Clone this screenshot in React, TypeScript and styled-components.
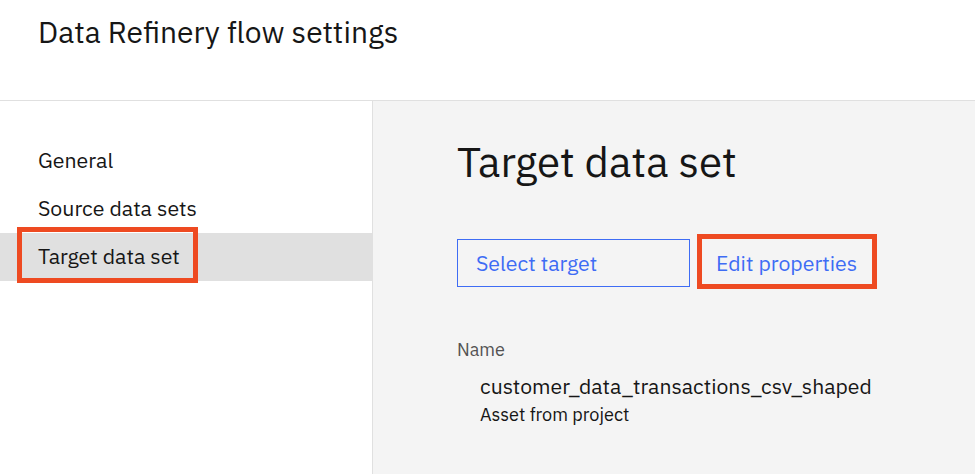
import React from "react";
import styled, { createGlobalStyle } from "styled-components";

const Global = createGlobalStyle`
  html, body { margin: 0; padding: 0; background: #ffffff; }
  body { font-family: "IBM Plex Sans", Inter, "Liberation Sans", sans-serif; color: #161616; }
  * { box-sizing: border-box; }
`;

const Page = styled.div`
  width: 975px;
  height: 474px;
  display: flex;
  flex-direction: column;
  overflow: hidden;
`;

const Header = styled.header`
  height: 101px;
  flex: none;
  padding: 13px 0 0 38px;
  border-bottom: 1px solid #e0e0e0;
`;

const Title = styled.h1`
  margin: 0;
  font-size: 30px;
  line-height: 38px;
  font-weight: 400;
  color: #161616;
`;

const Body = styled.div`
  flex: 1;
  display: flex;
  min-height: 0;
`;

const Sidebar = styled.nav`
  width: 373px;
  flex: none;
  border-right: 1px solid #e0e0e0;
  padding-top: 36px;
  display: flex;
  flex-direction: column;
`;

const NavItem = styled.div<{ $active?: boolean }>`
  position: relative;
  height: 48px;
  display: flex;
  align-items: center;
  padding: 0 0 2px 38px;
  font-size: 21.3px;
  color: #161616;
  background: ${(p) => (p.$active ? "#e0e0e0" : "transparent")};
`;

const Highlight = styled.span<{ $top: number; $right: number; $bottom: number; $left: number }>`
  position: absolute;
  top: ${(p) => p.$top}px;
  right: ${(p) => p.$right}px;
  bottom: ${(p) => p.$bottom}px;
  left: ${(p) => p.$left}px;
  border: 5px solid #ee4a21;
  pointer-events: none;
`;

const NavLabel = styled.span`
  position: relative;
`;

const Content = styled.main`
  flex: 1;
  background: #f4f4f4;
  padding: 36px 0 0 84px;
`;

const Heading = styled.h2`
  margin: 0;
  font-size: 42px;
  line-height: 50px;
  font-weight: 400;
  color: #161616;
`;

const ButtonRow = styled.div`
  display: flex;
  margin-top: 52px;
`;

const Button = styled.button<{ $kind: "tertiary" | "ghost" }>`
  position: relative;
  height: 48px;
  font-family: inherit;
  font-size: 21.3px;
  color: #3e6cf4;
  background: transparent;
  text-align: left;
  white-space: nowrap;
  cursor: pointer;
  border: 1px solid ${(p) => (p.$kind === "tertiary" ? "#3e6cf4" : "transparent")};
  width: ${(p) => (p.$kind === "tertiary" ? "233px" : "174px")};
  padding: ${(p) => (p.$kind === "tertiary" ? "0 0 0 18px" : "0 0 0 15px")};
  margin-left: ${(p) => (p.$kind === "ghost" ? "10px" : "0")};
`;

const Field = styled.div`
  margin-top: 51px;
  display: flex;
  flex-direction: column;
`;

const FieldLabel = styled.div`
  font-size: 18px;
  line-height: 24px;
  color: #525252;
`;

const FieldValue = styled.div`
  margin: 11px 0 0 23px;
  font-size: 21.2px;
  line-height: 26px;
  color: #161616;
`;

const FieldMeta = styled.div`
  margin: 4px 0 0 23px;
  font-size: 18.1px;
  line-height: 22px;
  color: #161616;
`;

export default function App() {
  return (
    <Page>
      <Global />
      <Header>
        <Title>Data Refinery flow settings</Title>
      </Header>
      <Body>
        <Sidebar>
          <NavItem>General</NavItem>
          <NavItem>Source data sets</NavItem>
          <NavItem $active>
            <Highlight $top={-6} $bottom={-2} $left={17} $right={174} />
            <NavLabel>Target data set</NavLabel>
          </NavItem>
        </Sidebar>
        <Content>
          <Heading>Target data set</Heading>
          <ButtonRow>
            <Button $kind="tertiary">Select target</Button>
            <Button $kind="ghost">
              <Highlight $top={-6} $bottom={-3} $left={-4} $right={-4} />
              Edit properties
            </Button>
          </ButtonRow>
          <Field>
            <FieldLabel>Name</FieldLabel>
            <FieldValue>customer_data_transactions_csv_shaped</FieldValue>
            <FieldMeta>Asset from project</FieldMeta>
          </Field>
        </Content>
      </Body>
    </Page>
  );
}
